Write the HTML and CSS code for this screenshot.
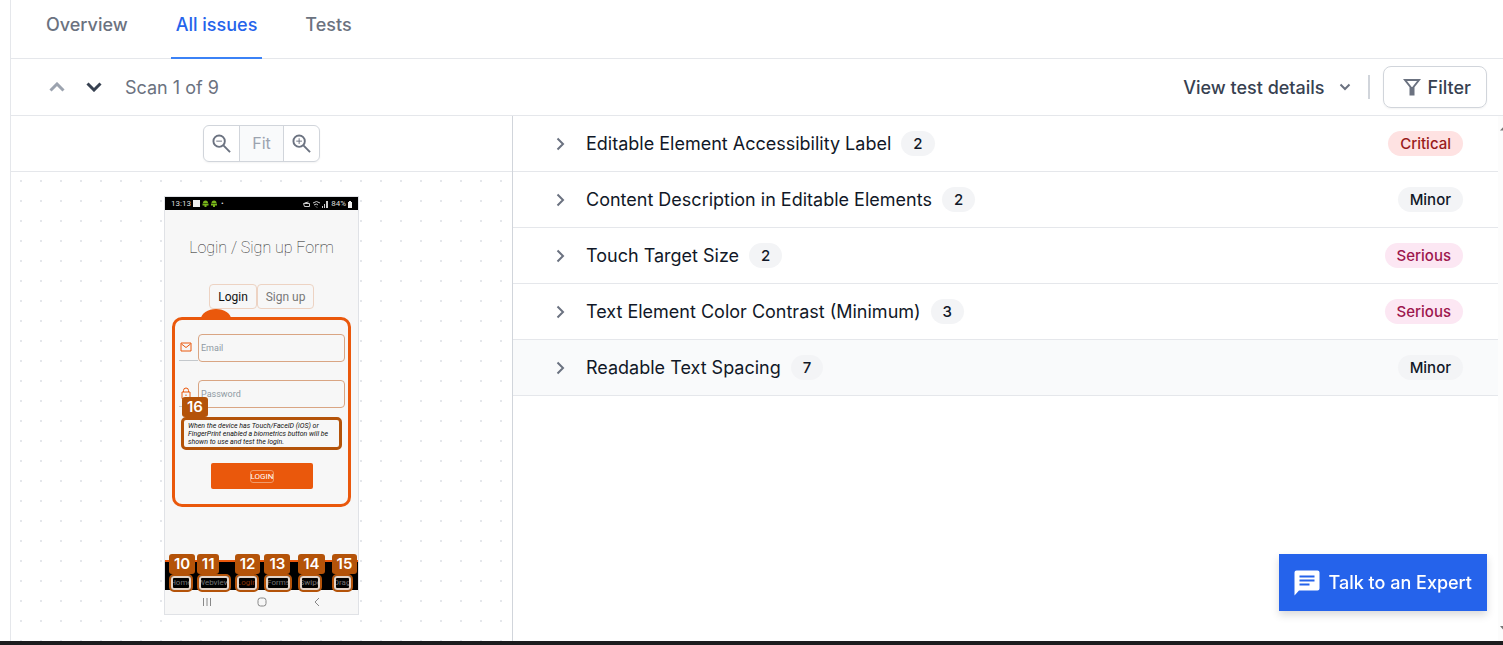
FILE: index.html
```
<!DOCTYPE html>
<html lang="en">
<head>
    <meta charset="UTF-8">
    <meta name="viewport" content="width=device-width, initial-scale=1.0">
    <title>All issues</title>
    <link rel="stylesheet" href="styles.css">
</head>
<body>
    <div class="page">
        <nav class="tabs">
            <a href="#overview">Overview</a>
            <a href="#issues" class="active">All issues</a>
            <a href="#tests">Tests</a>
        </nav>

        <div class="toolbar">
            <button class="arrow" aria-label="Previous scan" disabled>
                <svg width="16" height="10" viewBox="0 0 16 10"><path d="M1.500 8.500L8 2l6.500 6.500"/></svg>
            </button>
            <button class="arrow" aria-label="Next scan">
                <svg width="16" height="10" viewBox="0 0 16 10"><path d="M1.500 1.500L8 8l6.500-6.500"/></svg>
            </button>
            <span class="scan">Scan 1 of 9</span>
            <button class="details">View test details
                <svg width="12" height="8" viewBox="0 0 12 8"><path d="M1.500 1.500L6 6l4.500-4.500"/></svg>
            </button>
            <span class="divider"></span>
            <button class="filter">
                <svg width="18" height="18" viewBox="0 0 18 18"><path d="M2 2h14l-5.500 7v7.500h-3V9z"/><path d="M9 9v7"/></svg>
                Filter
            </button>
        </div>

        <div class="content">
            <section class="preview">
                <div class="zoombar">
                    <div class="zoom">
                        <button aria-label="Zoom out">
                            <svg width="19" height="19" viewBox="0 0 20 20"><circle cx="7.500" cy="7.500" r="6"/><path d="M12 12l7 7"/><path class="sign" d="M4.500 7.500h6"/></svg>
                        </button>
                        <button class="fit" disabled>Fit</button>
                        <button aria-label="Zoom in">
                            <svg width="19" height="19" viewBox="0 0 20 20"><circle cx="7.500" cy="7.500" r="6"/><path d="M12 12l7 7"/><path class="sign" d="M4.500 7.500h6M7.500 4.500v6"/></svg>
                        </button>
                    </div>
                </div>
                <div class="canvas">
                    <div class="phone">
                        <div class="status">
                            <span>13:13</span>
                            <svg width="26" height="8" viewBox="0 0 26 8">
                                <rect width="7" height="7" y="0" fill="#eee"/>
                                <path d="M10 3a2.500 2.500 0 0 1 5 0zM9.500 3.500h6v2h-2v1.500h-2V5.500h-2zM18.500 3a2.500 2.500 0 0 1 5 0zM18 3.500h6v2h-2v1.500h-2V5.500h-2z" fill="#78b41a"/>
                            </svg>
                            <span>&bull;</span>
                            <svg class="signal" width="26" height="8" viewBox="0 0 26 8">
                                <path d="M0.500 3.500h6v3h-5zM1.500 3l4-1M10 3q3.500-3 7 0M11 5q2.500-2 4 0M13 6.500l1 1" fill="none" stroke="#ccc"/>
                                <path d="M19 8V6h1v2zM21 8V4h1v4zM23 8V1h2v7z" fill="#ccc"/>
                            </svg>
                            <span>84%</span>
                            <svg width="4" height="8" viewBox="0 0 4 8"><path d="M0 2h1V1h2v1h1v6H0z" fill="#eee"/></svg>
                        </div>
                        <h2>Login / Sign up Form</h2>
                        <div class="switch">
                            <button class="on">Login</button>
                            <button>Sign up</button>
                        </div>
                        <form class="card">
                            <span class="dome"></span>
                            <div class="field">
                                <label for="email" aria-label="Email">
                                    <svg width="12" height="10" viewBox="0 0 12 10"><path d="M1 1h10v8H1zM1.500 2L6 5.500 10.500 2"/></svg>
                                </label>
                                <input id="email" type="text" placeholder="Email">
                            </div>
                            <div class="field">
                                <label for="pass" aria-label="Password">
                                    <svg width="12" height="12" viewBox="0 0 12 12"><path d="M2 5h8v6.500H2zM3.500 5V3.500a2.500 2.500 0 0 1 5 0V5M6 7.500v1.500"/></svg>
                                </label>
                                <input id="pass" type="password" placeholder="Password">
                            </div>
                            <div class="note">
                                <b class="badge">16</b>
                                When the device has Touch/FaceID (iOS) or<br>FingerPrint enabled a biometrics button will be<br>shown to use and test the login.
                            </div>
                            <button type="button" class="login"><span>LOGIN</span></button>
                        </form>
                        <div class="menu">
                            <div class="item"><b class="badge">10</b><span>Home</span></div>
                            <div class="item wide"><b class="badge">11</b><span>Webview</span></div>
                            <div class="item current"><b class="badge">12</b><span>Login</span></div>
                            <div class="item mid"><b class="badge">13</b><span>Forms</span></div>
                            <div class="item"><b class="badge">14</b><span>Swipe</span></div>
                            <div class="item small"><b class="badge">15</b><span>Drag</span></div>
                        </div>
                        <div class="sysnav">
                            <svg width="10" height="10" viewBox="0 0 10 10"><path d="M1.500 1v8M5 1v8M8.500 1v8"/></svg>
                            <svg width="10" height="10" viewBox="0 0 10 10"><rect x="1" y="1" width="8" height="8" rx="2.500"/></svg>
                            <svg width="10" height="10" viewBox="0 0 10 10"><path d="M7 1L3 5l4 4"/></svg>
                        </div>
                    </div>
                </div>
            </section>

            <ul class="issues">
                <li><button>
                    <svg width="10" height="14" viewBox="0 0 10 14"><path d="M1.500 1.500L7 7l-5.500 5.500"/></svg>
                    Editable Element Accessibility Label <span class="pill">2</span><span class="pill level critical">Critical</span>
                </button></li>
                <li><button>
                    <svg width="10" height="14" viewBox="0 0 10 14"><path d="M1.500 1.500L7 7l-5.500 5.500"/></svg>
                    Content Description in Editable Elements <span class="pill">2</span><span class="pill level">Minor</span>
                </button></li>
                <li><button>
                    <svg width="10" height="14" viewBox="0 0 10 14"><path d="M1.500 1.500L7 7l-5.500 5.500"/></svg>
                    Touch Target Size <span class="pill">2</span><span class="pill level serious">Serious</span>
                </button></li>
                <li><button>
                    <svg width="10" height="14" viewBox="0 0 10 14"><path d="M1.500 1.500L7 7l-5.500 5.500"/></svg>
                    Text Element Color Contrast (Minimum) <span class="pill">3</span><span class="pill level serious">Serious</span>
                </button></li>
                <li class="hover"><button>
                    <svg width="10" height="14" viewBox="0 0 10 14"><path d="M1.500 1.500L7 7l-5.500 5.500"/></svg>
                    Readable Text Spacing <span class="pill">7</span><span class="pill level">Minor</span>
                </button></li>
            </ul>

            <div class="scrollbar">
                <svg width="8" height="6" viewBox="0 0 8 6"><path d="M0 4.500L4 0l4 4.500z"/></svg>
                <svg width="8" height="6" viewBox="0 0 8 6"><path d="M0 1l4 4.500L8 1z"/></svg>
            </div>
        </div>
    </div>

    <button class="expert">
        <svg width="26" height="26" viewBox="0 0 26 26">
            <path d="M2.500 0.500h21a2 2 0 0 1 2 2v16a2 2 0 0 1-2 2H5l-4.500 5v-23a2 2 0 0 1 2-2z" fill="#fff"/>
            <path d="M5.500 6.500h15M5.500 10.500h15M5.500 14.500h10" stroke="#2563eb" stroke-width="2"/>
        </svg>
        Talk to an Expert
    </button>
</body>
</html>
```

FILE: styles.css
```
*{
    box-sizing: border-box;
}
body{
    margin: 0;
    height: 100vh;
    padding-left: 10px;
    background: #fff;
    border-bottom: 4px solid #1c1c1e;
    font-family: Inter, "Liberation Sans", sans-serif;
    font-size: 18px;
    color: #111827;
}
button{
    font: inherit;
    color: inherit;
    background: none;
    border: none;
    padding: 0;
}
svg{
    fill: none;
    stroke-width: 2px;
    flex: none;
}
.page{
    height: 100%;
    display: flex;
    flex-direction: column;
    border-left: 1px solid #e5e7eb;
}

/* tabs */
.tabs{
    display: flex;
    gap: 38px;
    height: 59px;
    padding-left: 30px;
    border-bottom: 1px solid #e5e7eb;
    flex: none;
}
.tabs a{
    height: 59px;
    padding: 12px 5px;
    line-height: 26px;
    font-weight: 500;
    color: #6b7280;
    text-decoration: none;
}
.tabs .active{
    color: #2563eb;
    border-bottom: 2px solid #3b82f6;
}

/* toolbar */
.toolbar{
    display: flex;
    align-items: center;
    height: 57px;
    padding: 0 16px 0 38px;
    border-bottom: 1px solid #e5e7eb;
    flex: none;
}
.arrow{
    display: flex;
    margin-right: 21px;
    stroke: #374151;
}
.arrow svg{
    stroke-width: 3px;
}
.arrow:disabled{
    stroke: #9ca3af;
}
.scan{
    margin-left: 2px;
    color: #6b7280;
}
.details{
    display: flex;
    align-items: center;
    gap: 14px;
    margin-left: auto;
    font-weight: 500;
    color: #374151;
    stroke: #6b7280;
}
.divider{
    width: 2px;
    height: 24px;
    margin: 0 13px 0 17px;
    background: #d1d5db;
}
.filter{
    display: flex;
    align-items: center;
    gap: 7px;
    height: 42px;
    padding: 0 15px 0 19px;
    border: 1px solid #d1d5db;
    border-radius: 8px;
    box-shadow: 0 1px 2px rgba(0,0,0,0.05);
    font-weight: 500;
    color: #374151;
    stroke: #6b7280;
}

.content{
    display: flex;
    flex: 1;
    min-height: 0;
}
.preview{
    display: flex;
    flex-direction: column;
    width: 34%;
    max-width: 502px;
    border-right: 1px solid #d1d5db;
}
.zoombar{
    display: flex;
    justify-content: center;
    align-items: center;
    height: 56px;
    border-bottom: 1px solid #e5e7eb;
    flex: none;
}
.zoom{
    display: flex;
    height: 37px;
    border: 1px solid #d1d5db;
    border-radius: 6px;
    box-shadow: 0 1px 2px rgba(0,0,0,0.05);
    font-size: 16px;
    stroke: #6b7280;
}
.zoom button{
    width: 35px;
    padding-bottom: 1px;
    display: flex;
    align-items: center;
    justify-content: center;
}
.zoom .fit{
    width: 45px;
    background: #f9fafb;
    border: solid #d1d5db;
    border-width: 0 1px;
    color: #9ca3af;
}
.sign{
    stroke-width: 1px;
}
.canvas{
    flex: 1;
    display: flex;
    justify-content: center;
    align-items: flex-start;
    padding-top: 24px;
    overflow: hidden;
    background-image: conic-gradient(from 270deg at 2px 2px, #e5e7eb 90deg, transparent 0);
    background-size: 20px 20px;
    background-position: 9px 8px;
}

/* device screenshot */
.phone{
    display: flex;
    flex-direction: column;
    width: 195px;
    height: 419px;
    border: 1px solid #e0e2e6;
    background: #f7f7f7;
    font-family: Roboto, sans-serif;
}
.status{
    display: flex;
    align-items: center;
    gap: 2px;
    height: 13px;
    padding: 0 6px;
    background: #000;
    color: #ddd;
    font-size: 8px;
}
.signal{
    margin-left: auto;
    stroke-width: 1px;
}
.phone h2{
    margin: 26px 0 24px;
    font-size: 16px;
    line-height: 24px;
    font-weight: 100;
    text-align: center;
    color: #222;
}
.switch{
    display: flex;
    justify-content: center;
    height: 25px;
    margin-bottom: 8px;
    font-size: 12px;
    color: #777;
}
.switch button{
    width: 57px;
    border: 1px solid #edd3c3;
    border-radius: 4px;
}
.switch .on{
    width: 48px;
    color: #111;
}
.card{
    position: relative;
    height: 190px;
    margin: 0 7px;
    padding: 14px 3px 0 4px;
    border: 3px solid #ea580c;
    border-radius: 10px;
}
.dome{
    position: absolute;
    left: 26px;
    top: -11px;
    width: 30px;
    height: 10px;
    background: #ea580c;
    border-radius: 15px 15px 0 0 / 10px 10px 0 0;
}
.field{
    display: flex;
    height: 28px;
    margin-bottom: 18px;
}
.field label{
    display: flex;
    align-items: center;
    width: 19px;
    height: 27px;
    padding-left: 1px;
    border-bottom: 1px solid #c4c8cc;
    stroke: #ea580c;
}
.field svg{
    stroke-width: 1px;
}
.field input{
    flex: 1;
    min-width: 0;
    padding: 0 2px;
    border: 1px solid #d9a583;
    border-radius: 4px;
    background: none;
    font: 9px Roboto, sans-serif;
}
.field input::placeholder{
    color: #8f9aa3;
}
.note{
    position: relative;
    height: 33px;
    margin: -9px 3px 13px 2px;
    padding: 2px 0 0 4px;
    border: 3px solid #b45309;
    border-radius: 5px;
    font-size: 7px;
    line-height: 8px;
    font-style: italic;
    white-space: nowrap;
    color: #111;
}
.badge{
    position: absolute;
    left: -2px;
    bottom: 30px;
    padding: 0 5px;
    background: #b45309;
    border-radius: 3px;
    color: #fff;
    font: 600 15px/20px Inter, sans-serif;
}
.login{
    display: flex;
    align-items: center;
    justify-content: center;
    width: 102px;
    height: 26px;
    margin-left: 32px;
    border-radius: 2px;
    background: #ea580c;
    color: #fff;
    font-size: 8px;
}
.login span{
    border: 1px solid #f09a6a;
    border-radius: 3px;
    line-height: 11px;
}
.menu{
    display: grid;
    grid-template-columns: repeat(6, 1fr);
    justify-items: center;
    height: 30px;
    margin-top: auto;
    padding-top: 12px;
    background: #000;
    border-top: 2px solid #ea580c;
}
.item{
    position: relative;
    width: 24px;
    height: 18px;
    border: 2px solid #b45309;
    border-radius: 5px;
    font-size: 8px;
    line-height: 10px;
    color: #777;
}
.item span{
    display: flex;
    justify-content: center;
    height: 14px;
    border: 2px solid #e3d3c7;
    border-radius: 3px;
    background: #000;
    overflow: hidden;
}
.item .badge{
    bottom: 16px;
}
.wide{
    width: 34px;
}
.mid{
    width: 28px;
}
.small{
    width: 21px;
}
.current{
    color: #8a3506;
}
.sysnav{
    display: flex;
    justify-content: center;
    align-items: center;
    gap: 45px;
    height: 24px;
    stroke: #888;
}
.sysnav svg{
    stroke-width: 1px;
}

/* issues list */
.issues{
    flex: 1;
    margin: 0;
    padding: 0;
    list-style: none;
}
.issues li{
    border-bottom: 1px solid #e5e7eb;
}
.issues button{
    display: flex;
    align-items: center;
    width: 100%;
    height: 55px;
    padding: 0 35px 0 43px;
    stroke: #6b7280;
}
.issues svg{
    margin-right: 20px;
}
.hover{
    background: #f9fafb;
}
.pill{
    margin-left: 10px;
    padding: 0 12px;
    border-radius: 13px;
    background: #f3f4f6;
    font-size: 15px;
    line-height: 25px;
    font-weight: 500;
}
.level{
    margin-left: auto;
}
.critical{
    background: #fee2e2;
    color: #991b1b;
}
.serious{
    background: #fce7f3;
    color: #9d174d;
}
.scrollbar{
    display: flex;
    flex-direction: column;
    justify-content: space-between;
    width: 5px;
    padding: 10px 0 10px 2px;
    background: #fcfcfc;
    overflow: hidden;
}
.scrollbar path{
    fill: #777;
}

.expert{
    position: fixed;
    right: 16px;
    bottom: 34px;
    display: flex;
    align-items: center;
    gap: 9px;
    height: 57px;
    padding: 0 15px;
    background: #2563eb;
    box-shadow: 0 4px 8px rgba(0,0,0,0.15);
    color: #fff;
    font-weight: 500;
}
```
